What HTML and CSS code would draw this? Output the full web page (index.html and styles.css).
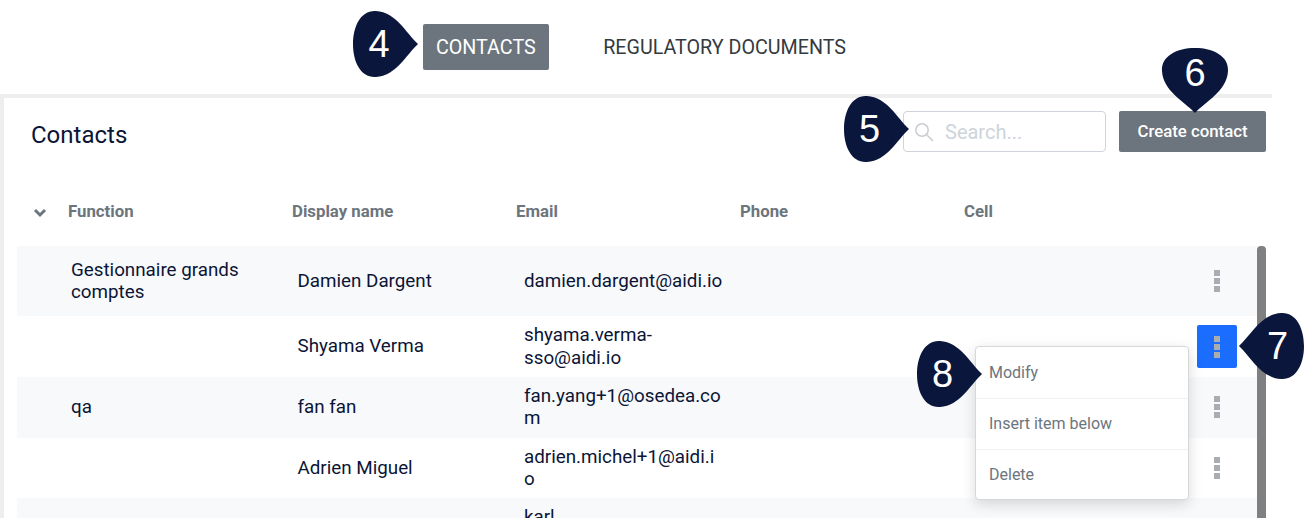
FILE: index.html
```html
<!DOCTYPE html>
<html lang="en">
<head>
  <meta charset="UTF-8" />
  <title>Contacts</title>
  <link rel="stylesheet" href="styles.css">
</head>
<body>

  <nav class="tabs">
    <a class="tab tab-active">CONTACTS</a>
    <a class="tab">REGULATORY DOCUMENTS</a>
  </nav>

  <main class="card">
    <div class="card-head">
      <h1>Contacts</h1>
      <div class="card-actions">
        <div class="search">
          <svg class="search-icon" width="20" height="20" viewBox="0 0 20 20" fill="none" stroke="#c9ccd0" stroke-width="1.5"><circle cx="8" cy="8" r="6.2"/><path d="M12.5 12.5 L19 19"/></svg>
          <span>Search...</span>
        </div>
        <button class="create">Create contact</button>
      </div>
    </div>

    <div class="cols">
      <svg class="chevron" width="14" height="10" viewBox="0 0 14 10" fill="none" stroke="#6c757d" stroke-width="3"><path d="M2 2 L7 7 L12 2"/></svg>
      <span>Function</span>
      <span>Display name</span>
      <span>Email</span>
      <span>Phone</span>
      <span>Cell</span>
    </div>

    <div class="table-wrap">
      <div class="rows">
        <div class="row row-first">
          <div>Gestionnaire grands comptes</div>
          <div>Damien Dargent</div>
          <div class="email">damien.dargent@aidi.io</div>
          <div></div>
          <div></div>
          <div class="more"><i></i><i></i><i></i></div>
        </div>
        <div class="row">
          <div></div>
          <div>Shyama Verma</div>
          <div class="email">shyama.verma-sso@aidi.io</div>
          <div></div>
          <div></div>
          <div class="more more-active"><i></i><i></i><i></i></div>
        </div>
        <div class="row">
          <div>qa</div>
          <div>fan fan</div>
          <div class="email">fan.yang+1@osedea.com</div>
          <div></div>
          <div></div>
          <div class="more"><i></i><i></i><i></i></div>
        </div>
        <div class="row">
          <div></div>
          <div>Adrien Miguel</div>
          <div class="email">adrien.michel+1@aidi.io</div>
          <div></div>
          <div></div>
          <div class="more"><i></i><i></i><i></i></div>
        </div>
        <div class="row">
          <div></div>
          <div></div>
          <div class="email">karl<br>&nbsp;</div>
          <div></div>
          <div></div>
          <div class="more"><i></i><i></i><i></i></div>
        </div>
      </div>
      <div class="scrollbar"></div>
    </div>
  </main>

  <!-- menu contextuel -->
  <ul class="menu">
    <li>Modify</li>
    <li>Insert item below</li>
    <li>Delete</li>
  </ul>

  <!-- callouts -->
  <div class="pin pin-4"><svg width="68" height="68" viewBox="0 0 68 68"><path d="M66 34 C54 23 44 2 24 1 C9 0 1 16 1 34 C1 52 9 68 24 67 C44 66 54 45 66 34Z"/></svg><span>4</span></div>
  <div class="pin pin-5"><svg width="68" height="68" viewBox="0 0 68 68"><path d="M66 34 C54 23 44 2 24 1 C9 0 1 16 1 34 C1 52 9 68 24 67 C44 66 54 45 66 34Z"/></svg><span>5</span></div>
  <div class="pin pin-6"><svg class="point-down" width="68" height="68" viewBox="0 0 68 68"><path d="M66 34 C54 23 44 2 24 1 C9 0 1 16 1 34 C1 52 9 68 24 67 C44 66 54 45 66 34Z"/></svg><span>6</span></div>
  <div class="pin pin-7"><svg class="point-left" width="68" height="68" viewBox="0 0 68 68"><path d="M66 34 C54 23 44 2 24 1 C9 0 1 16 1 34 C1 52 9 68 24 67 C44 66 54 45 66 34Z"/></svg><span>7</span></div>
  <div class="pin pin-8"><svg width="68" height="68" viewBox="0 0 68 68"><path d="M66 34 C54 23 44 2 24 1 C9 0 1 16 1 34 C1 52 9 68 24 67 C44 66 54 45 66 34Z"/></svg><span>8</span></div>

</body>
</html>
```

FILE: styles.css
```css
html, body { height: 518px; overflow: hidden; }
body { font-family: 'Roboto', sans-serif; background: #fff; margin: 0; padding: 0; color: #0b1536; position: relative; }

.tabs { height: 94px; display: flex; align-items: center; box-sizing: border-box; padding: 0 0 1px 423px; gap: 41px; }
.tab { font-size: 19.7px; padding: 0 13.5px 0 13px; height: 46px; line-height: 47px; border-radius: 2px; color: #343a40; }
.tab-active { background: #6c757d; color: #fff; }

.card { width: 1272px; height: 424px; border-top: 4px solid #eee; border-left: 4px solid #eee; box-sizing: border-box; }

.card-head { display: flex; justify-content: space-between; align-items: center; padding: 13px 6px 0 27px; }
.card-head h1 { margin: 0; font-size: 24px; font-weight: 400; position: relative; top: 3px; }
.card-actions { display: flex; gap: 13px; }

.search { width: 203px; height: 41px; box-sizing: border-box; border: 1px solid #ced4da; border-radius: 4px; display: flex; align-items: center; padding-left: 10px; gap: 11px; font-size: 20px; color: #ced4da; }
.create { width: 147px; height: 41px; padding: 0 0 2px; background: #6c757d; color: #fff; border: none; border-radius: 2px; font-family: inherit; font-size: 16.8px; font-weight: 500; }

.cols { display: grid; grid-template-columns: 224px 224px 224px 224px 224px; padding: 47px 0 0 64px; font-size: 16.8px; font-weight: 700; color: #6c757d; height: 24px; line-height: 24px; position: relative; }
.chevron { position: absolute; left: 29px; top: 56px; }

.table-wrap { display: flex; padding: 23px 0 0 13px; }
.rows { width: 1240px; }
.row { display: grid; grid-template-columns: 226.5px 226.5px 227px 224px 224px 1fr; align-items: center; padding: 8px 0 7.75px 54px; font-size: 18.8px; line-height: 22.5px; min-height: 45px; }
.row:nth-child(odd) { background: #f8f9fb; }
.row-first { padding-top: 12.5px; padding-bottom: 12.5px; }
.email { width: 200px; word-break: break-word; }

.more { width: 40px; height: 43px; margin-left: -2px; display: flex; flex-direction: column; align-items: center; justify-content: center; gap: 2px; border-radius: 2px; }
.more i { width: 6px; height: 6px; background: #a9adb2; }
.more-active { background: #1a6dff; }

.scrollbar { width: 9px; height: 300px; background: #808080; border-radius: 4px 4px 0 0; }

.menu { position: absolute; left: 975px; top: 346px; width: 214px; height: 154px; box-sizing: border-box; margin: 0; padding: 1px 0 0; list-style: none; background: #fff; border: 1px solid #d5d7da; border-radius: 4px; box-shadow: 0 4px 14px rgba(0,0,0,.15); }
.menu li { height: 51px; box-sizing: border-box; padding-left: 13px; line-height: 49px; font-size: 16px; color: #6c757d; border-bottom: 1px solid #f0f1f2; }
.menu li:last-child { border-bottom: none; }

.pin { position: absolute; width: 68px; height: 68px; }
.pin svg { display: block; fill: #0a163c; }
.pin span { position: absolute; left: 0; top: 0; width: 53px; text-align: center; line-height: 68px; font-family: 'Liberation Sans', sans-serif; font-size: 38px; color: #fff; }
.point-down { transform: rotate(90deg); }
.point-left { transform: rotate(180deg); }
.pin-4 { left: 352px; top: 10px; }
.pin-4 span { width: 54px; }
.pin-5 { left: 843px; top: 95px; }
.pin-6 { left: 1161px; top: 47px; }
.pin-6 span { width: 68px; line-height: 52px; }
.pin-7 { left: 1237px; top: 312px; }
.pin-7 span { left: 14px; }
.pin-8 { left: 916px; top: 340px; }
```
